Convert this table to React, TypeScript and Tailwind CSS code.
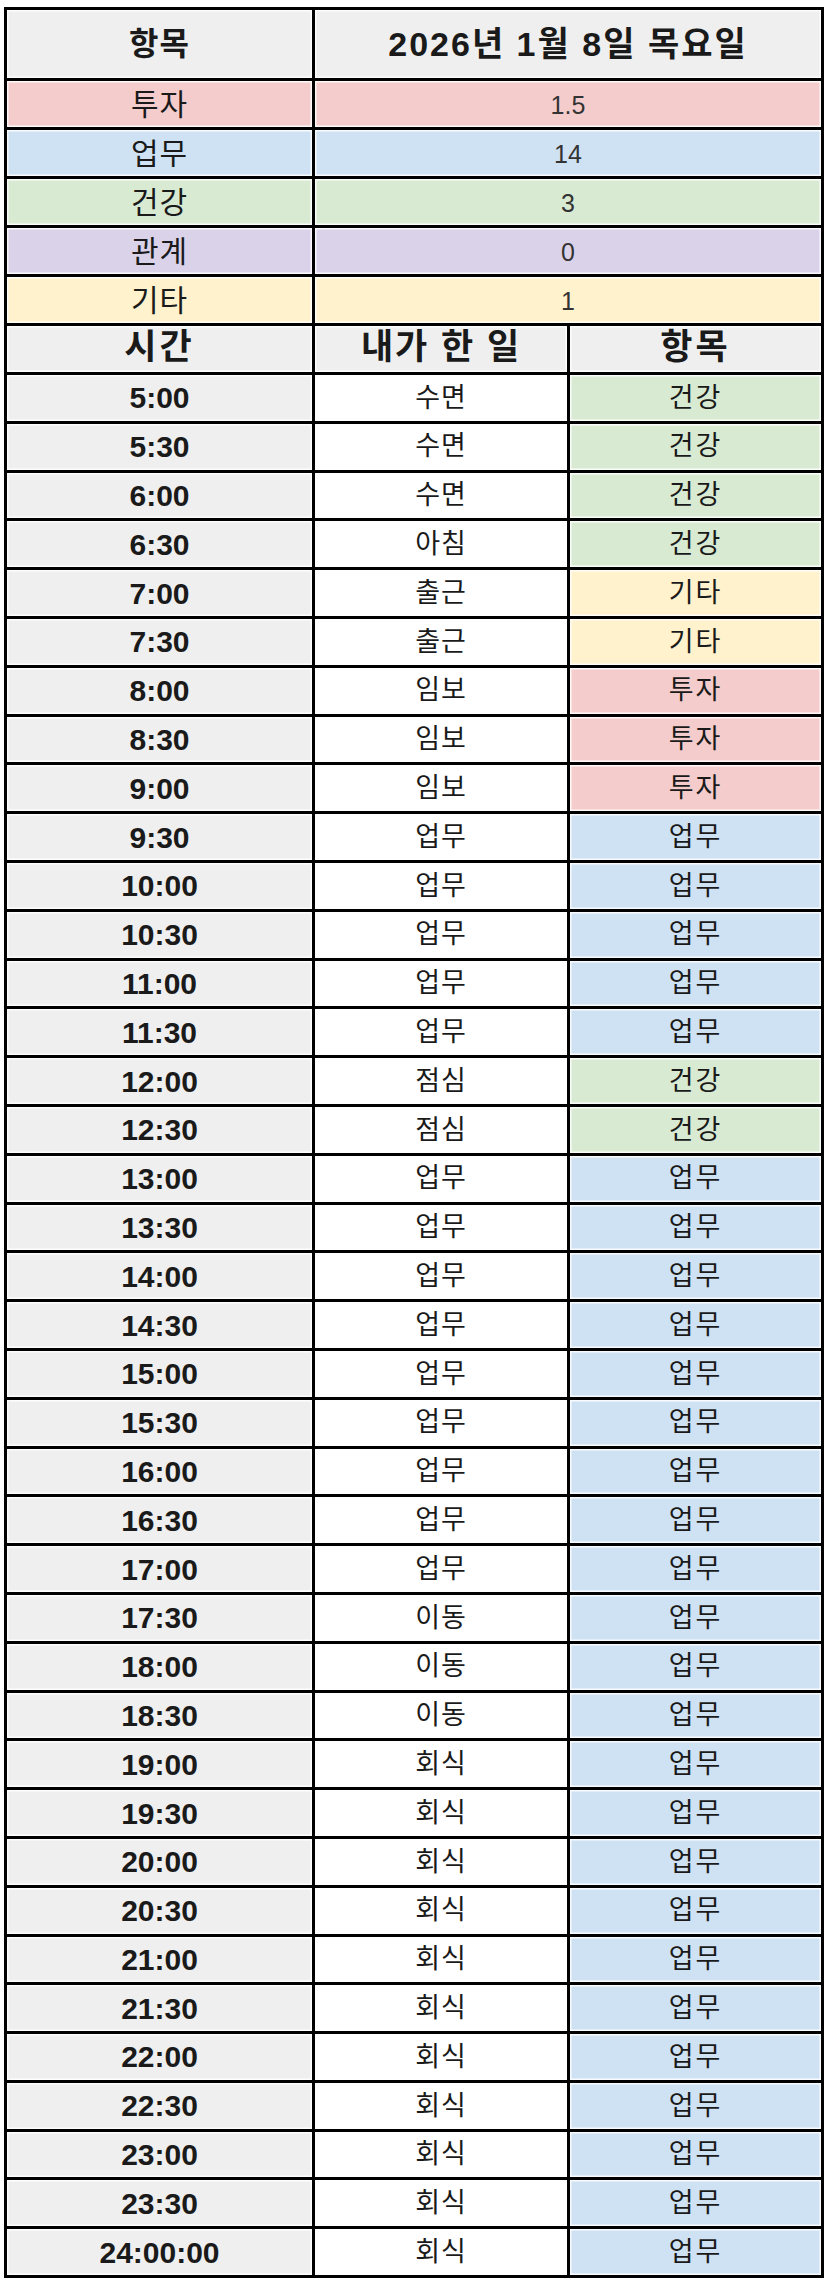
const FONT = "font-['Liberation_Sans','Noto_Sans_CJK_KR',sans-serif]";

const CAT: Record<string, string> = {
  투자: "bg-[#f4cccc]",
  업무: "bg-[#cfe2f3]",
  건강: "bg-[#d9ead3]",
  관계: "bg-[#d9d2e9]",
  기타: "bg-[#fff2cc]",
};

const summary: [string, string][] = [
  ["투자", "1.5"],
  ["업무", "14"],
  ["건강", "3"],
  ["관계", "0"],
  ["기타", "1"],
];

const rows: [string, string, string][] = [
  ["5:00", "수면", "건강"],
  ["5:30", "수면", "건강"],
  ["6:00", "수면", "건강"],
  ["6:30", "아침", "건강"],
  ["7:00", "출근", "기타"],
  ["7:30", "출근", "기타"],
  ["8:00", "임보", "투자"],
  ["8:30", "임보", "투자"],
  ["9:00", "임보", "투자"],
  ["9:30", "업무", "업무"],
  ["10:00", "업무", "업무"],
  ["10:30", "업무", "업무"],
  ["11:00", "업무", "업무"],
  ["11:30", "업무", "업무"],
  ["12:00", "점심", "건강"],
  ["12:30", "점심", "건강"],
  ["13:00", "업무", "업무"],
  ["13:30", "업무", "업무"],
  ["14:00", "업무", "업무"],
  ["14:30", "업무", "업무"],
  ["15:00", "업무", "업무"],
  ["15:30", "업무", "업무"],
  ["16:00", "업무", "업무"],
  ["16:30", "업무", "업무"],
  ["17:00", "업무", "업무"],
  ["17:30", "이동", "업무"],
  ["18:00", "이동", "업무"],
  ["18:30", "이동", "업무"],
  ["19:00", "회식", "업무"],
  ["19:30", "회식", "업무"],
  ["20:00", "회식", "업무"],
  ["20:30", "회식", "업무"],
  ["21:00", "회식", "업무"],
  ["21:30", "회식", "업무"],
  ["22:00", "회식", "업무"],
  ["22:30", "회식", "업무"],
  ["23:00", "회식", "업무"],
  ["23:30", "회식", "업무"],
  ["24:00:00", "회식", "업무"],
];

const cell =
  "flex items-center justify-center shadow-[inset_0_0_0_1.5px_rgba(255,255,255,0.85)]";

export default function App() {
  return (
    <div className={`min-h-screen bg-white pt-[7px] pl-[4px] ${FONT}`}>
      <div className="grid w-[820px] grid-cols-[305px_252px_1fr] gap-[3px] bg-black p-[3px] text-[#1a1a1a]">
        {/* 요약 */}
        <div className={`${cell} h-[68px] bg-[#efefef] text-[32px] font-bold tracking-[1px]`}>항목</div>
        <div className={`${cell} col-span-2 h-[68px] bg-[#efefef] text-[34px] font-bold tracking-[2px]`}>
          2026년 1월 8일 목요일
        </div>
        {summary.map(([k, v]) => (
          <div key={k} className="contents">
            <div className={`${cell} h-[46px] ${CAT[k]} text-[30px] tracking-[1px]`}>{k}</div>
            <div className={`${cell} col-span-2 h-[46px] ${CAT[k]} pt-1 text-[25px] text-[#333]`}>
              {v}
            </div>
          </div>
        ))}

        {/* 시간표 */}
        <div className={`${cell} h-[46px] bg-[#efefef] pb-1 text-[35px] font-bold tracking-[3px]`}>시간</div>
        <div className={`${cell} h-[46px] bg-[#efefef] pb-1 text-[35px] font-bold tracking-[2px]`}>
          내가 한 일
        </div>
        <div className={`${cell} h-[46px] bg-[#efefef] pb-1 text-[35px] font-bold tracking-[3px]`}>항목</div>
        {rows.map(([t, what, cat]) => (
          <div key={t} className="contents">
            <div className={`${cell} h-[45.8px] bg-[#efefef] text-[30px] font-bold`}>{t}</div>
            <div className={`${cell} h-[45.8px] bg-white text-[27px] tracking-[1px]`}>{what}</div>
            <div className={`${cell} h-[45.8px] ${CAT[cat]} text-[27px] tracking-[2px]`}>{cat}</div>
          </div>
        ))}
      </div>
    </div>
  );
}
